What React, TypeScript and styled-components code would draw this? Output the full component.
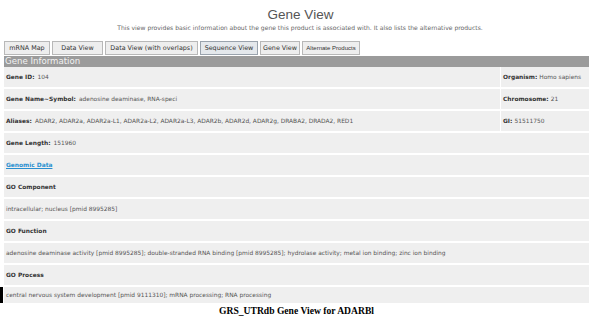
import React from "react";
import styled, { createGlobalStyle } from "styled-components";

const Global = createGlobalStyle`
  html, body { margin: 0; padding: 0; background: #fff; }
  body { width: 593px; height: 324px; overflow: hidden; }
`;

const Page = styled.div`
  position: relative;
  width: 593px;
  height: 324px;
  font-family: "DejaVu Sans", Verdana, sans-serif;
  display: flex;
  flex-direction: column;
`;

const Title = styled.h1`
  margin: 6px 0 0;
  padding-left: 8px;
  height: 17px;
  line-height: 17px;
  text-align: center;
  font-family: "Liberation Sans", Arial, sans-serif;
  font-weight: normal;
  font-size: 13.5px;
  color: #555;
`;

const Subtitle = styled.p`
  margin: 1px 0 0;
  padding-left: 7px;
  height: 8px;
  line-height: 8px;
  text-align: center;
  font-size: 6.05px;
  color: #666;
`;

const Tabs = styled.div`
  display: flex;
  gap: 2px;
  margin: 9px 0 0 4px;
  height: 14px;
`;

const Tab = styled.div<{ $narrow?: boolean; $active?: boolean; $w: number }>`
  box-sizing: border-box;
  width: ${(p) => p.$w}px;
  height: 14px;
  border: 1px solid ${(p) => (p.$active ? "#9aa3ad" : "#b8b8b8")};
  background: ${(p) => (p.$active ? "#e4e8ec" : "#eeeeee")};
  display: flex;
  align-items: center;
  justify-content: center;
  font-family: ${(p) => (p.$narrow ? '"Liberation Sans", Arial, sans-serif' : '"DejaVu Sans", Verdana, sans-serif')};
  font-size: ${(p) => (p.$narrow ? "6px" : "6.4px")};
  color: #333;
  white-space: nowrap;
`;

const Table = styled.div`
  margin: 1px 4px 0 4px;
  display: flex;
  flex-direction: column;
  gap: 2px;
`;

const Header = styled.div`
  height: 11px;
  margin-bottom: -2px;
  background: #9b9b9b;
  color: #f2f2f2;
  font-size: 8.6px;
  line-height: 11px;
  padding-left: 1px;
`;

const Row = styled.div<{ $cut?: boolean }>`
  display: flex;
  gap: 1px;
  height: ${(p) => (p.$cut ? 16 : 20)}px;
`;

const Cell = styled.div<{ $w?: number }>`
  ${(p) => (p.$w ? `width: ${p.$w}px; flex: none;` : "flex: 1;")}
  background: #efefef;
  display: flex;
  align-items: center;
  padding-left: 2px;
  font-size: 5.9px;
  color: #555;
  white-space: nowrap;
  overflow: hidden;
`;

const Label = styled.b<{ $tight?: boolean }>`
  color: #333;
  font-weight: bold;
  margin-right: ${(p) => (p.$tight ? 2 : 3)}px;
`;

const Link = styled.a`
  color: #2a8fd0;
  font-weight: bold;
  text-decoration: underline;
`;

const Caption = styled.div`
  margin-top: 1px;
  height: 14px;
  line-height: 14px;
  text-align: center;
  font-family: "Liberation Serif", "Times New Roman", serif;
  font-weight: bold;
  font-size: 9.6px;
  color: #000;
`;

const Marker = styled.div`
  position: absolute;
  left: 0;
  top: 287px;
  width: 3px;
  height: 16px;
  background: #000;
`;

const tabs: { label: string; w: number; narrow?: boolean; active?: boolean }[] = [
  { label: "mRNA Map", w: 46 },
  { label: "Data View", w: 51 },
  { label: "Data View (with overlaps)", w: 93 },
  { label: "Sequence View", w: 58, active: true },
  { label: "Gene View", w: 40 },
  { label: "Alternate Products", w: 58, narrow: true },
];

export default function App() {
  return (
    <>
      <Global />
      <Page>
        <Title>Gene View</Title>
        <Subtitle>
          This view provides basic information about the gene this product is associated with. It also lists the alternative products.
        </Subtitle>
        <Tabs>
          {tabs.map((t) => (
            <Tab key={t.label} $w={t.w} $narrow={t.narrow} $active={t.active}>
              {t.label}
            </Tab>
          ))}
        </Tabs>
        <Table>
          <Header>Gene Information</Header>
          <Row>
            <Cell><Label>Gene ID:</Label>104</Cell>
            <Cell $w={86}><Label $tight>Organism:</Label>Homo sapiens</Cell>
          </Row>
          <Row>
            <Cell><Label>Gene Name~Symbol:</Label>adenosine deaminase, RNA-speci</Cell>
            <Cell $w={86}><Label $tight>Chromosome:</Label>21</Cell>
          </Row>
          <Row>
            <Cell>
              <Label>Aliases:</Label>ADAR2, ADAR2a, ADAR2a-L1, ADAR2a-L2, ADAR2a-L3, ADAR2b, ADAR2d, ADAR2g, DRABA2, DRADA2, RED1
            </Cell>
            <Cell $w={86}><Label $tight>GI:</Label>51511750</Cell>
          </Row>
          <Row>
            <Cell><Label>Gene Length:</Label>151960</Cell>
          </Row>
          <Row>
            <Cell><Link>Genomic Data</Link></Cell>
          </Row>
          <Row>
            <Cell><Label>GO Component</Label></Cell>
          </Row>
          <Row>
            <Cell>intracellular; nucleus [pmid 8995285]</Cell>
          </Row>
          <Row>
            <Cell><Label>GO Function</Label></Cell>
          </Row>
          <Row>
            <Cell>
              adenosine deaminase activity [pmid 8995285]; double-stranded RNA binding [pmid 8995285]; hydrolase activity; metal ion binding; zinc ion binding
            </Cell>
          </Row>
          <Row>
            <Cell><Label>GO Process</Label></Cell>
          </Row>
          <Row $cut>
            <Cell>central nervous system development [pmid 9111310]; mRNA processing; RNA processing</Cell>
          </Row>
        </Table>
        <Caption>GRS_UTRdb Gene View for ADARBl</Caption>
        <Marker />
      </Page>
    </>
  );
}
